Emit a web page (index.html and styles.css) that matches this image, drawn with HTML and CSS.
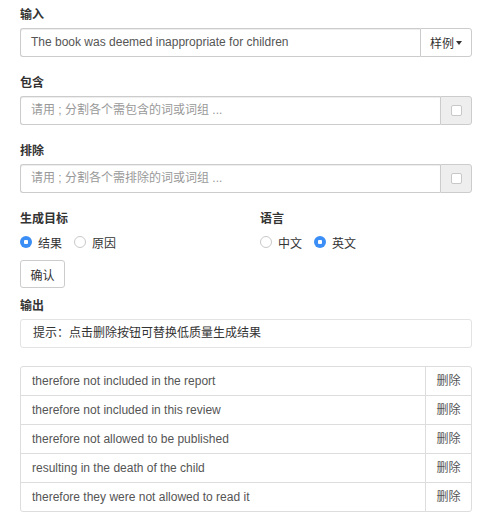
FILE: index.html
```html
<!DOCTYPE html>
<html lang="zh">
<head>
<meta charset="utf-8">
<link rel="stylesheet" href="styles.css">
</head>
<body>
<div class="page">
  <div class="group">
    <label class="lbl">输入</label>
    <div class="igroup">
      <div class="field text">The book was deemed inappropriate for children</div>
      <div class="addon btn-addon">样例<span class="caret"></span></div>
    </div>
  </div>
  <div class="group">
    <label class="lbl">包含</label>
    <div class="igroup">
      <div class="field ph">请用 ; 分割各个需包含的词或词组 ...</div>
      <div class="addon gray"><span class="check"></span></div>
    </div>
  </div>
  <div class="group">
    <label class="lbl">排除</label>
    <div class="igroup">
      <div class="field ph">请用 ; 分割各个需排除的词或词组 ...</div>
      <div class="addon gray"><span class="check"></span></div>
    </div>
  </div>
  <div class="cols">
    <div>
      <label class="lbl">生成目标</label>
      <div class="radios">
        <span class="radio on"></span><span class="rtext">结果</span>
        <span class="radio"></span><span class="rtext">原因</span>
      </div>
    </div>
    <div>
      <label class="lbl">语言</label>
      <div class="radios">
        <span class="radio"></span><span class="rtext">中文</span>
        <span class="radio on"></span><span class="rtext">英文</span>
      </div>
    </div>
  </div>
  <div class="btn">确认</div>
  <label class="lbl out">输出</label>
  <div class="hint">提示：点击删除按钮可替换低质量生成结果</div>
  <ul class="list">
    <li><span class="item">therefore not included in the report</span><span class="del">删除</span></li>
    <li><span class="item">therefore not included in this review</span><span class="del">删除</span></li>
    <li><span class="item">therefore not allowed to be published</span><span class="del">删除</span></li>
    <li><span class="item">resulting in the death of the child</span><span class="del">删除</span></li>
    <li><span class="item">therefore they were not allowed to read it</span><span class="del">删除</span></li>
  </ul>
</div>
</body>
</html>
```

FILE: styles.css
```css
* { box-sizing: border-box; }
html, body { margin: 0; padding: 0; background: #fff; }
body {
  font-family: "Liberation Sans", "Noto Sans CJK SC", sans-serif;
  font-size: 12px;
  color: #333;
}
.page {
  width: 499px;
  padding: 7px 27px 0 20px;
}
.lbl {
  display: block;
  font-weight: bold;
  line-height: 17px;
  margin-bottom: 4px;
  color: #333;
}
.group { margin-bottom: 18px; }
.igroup {
  display: flex;
  height: 29px;
}
.field {
  flex: 1;
  border: 1px solid #ccc;
  border-right: 0;
  border-radius: 3px 0 0 3px;
  padding: 0 10px;
  line-height: 27px;
  color: #555;
  box-shadow: inset 0 1px 1px rgba(0,0,0,0.075);
}
.field.ph { color: #999; }
.addon {
  border: 1px solid #ccc;
  border-radius: 0 3px 3px 0;
  display: flex;
  align-items: center;
  justify-content: center;
}
.btn-addon {
  width: 52px;
  color: #333;
  background: #fff;
}
.caret {
  display: inline-block;
  width: 0; height: 0;
  margin-left: 2px;
  border-top: 4px solid #333;
  border-left: 3px solid transparent;
  border-right: 3px solid transparent;
}
.addon.gray {
  width: 32px;
  background: #eee;
}
.check {
  width: 11px; height: 11px;
  border: 1px solid #c8c8c8;
  border-radius: 2px;
  background: #fff;
}
.cols {
  display: grid;
  grid-template-columns: 240px 1fr;
}
.radios {
  display: flex;
  align-items: center;
  height: 20px;
}
.radio {
  width: 12px; height: 12px;
  border-radius: 50%;
  border: 1px solid #c9c9c9;
  background: #fff;
  margin-right: 6px;
  flex: none;
}
.radio.on {
  border: 0;
  background: radial-gradient(circle, #fff 0 2px, #3b8ef5 2.5px);
}
.rtext { margin-right: 12px; color: #333; }
.btn {
  margin-top: 8px;
  width: 45px;
  height: 28px;
  border: 1px solid #ccc;
  border-radius: 3px;
  display: flex;
  align-items: center;
  justify-content: center;
  color: #333;
}
.lbl.out { margin-top: 10px; }
.hint {
  height: 29px;
  border: 1px solid #e3e3e3;
  border-radius: 3px;
  padding: 0 12px;
  line-height: 27px;
  color: #333;
}
.list {
  list-style: none;
  margin: 18px 0 0;
  padding: 0;
  border: 1px solid #ddd;
  border-radius: 3px;
}
.list li {
  display: flex;
  height: 29px;
  border-top: 1px solid #ddd;
}
.list li:first-child { border-top: 0; height: 28px; }
.item {
  flex: 1;
  padding: 0 11px;
  line-height: 28px;
  color: #555;
}
.del {
  width: 46px;
  border-left: 1px solid #ddd;
  text-align: center;
  line-height: 28px;
  color: #555;
}
```
